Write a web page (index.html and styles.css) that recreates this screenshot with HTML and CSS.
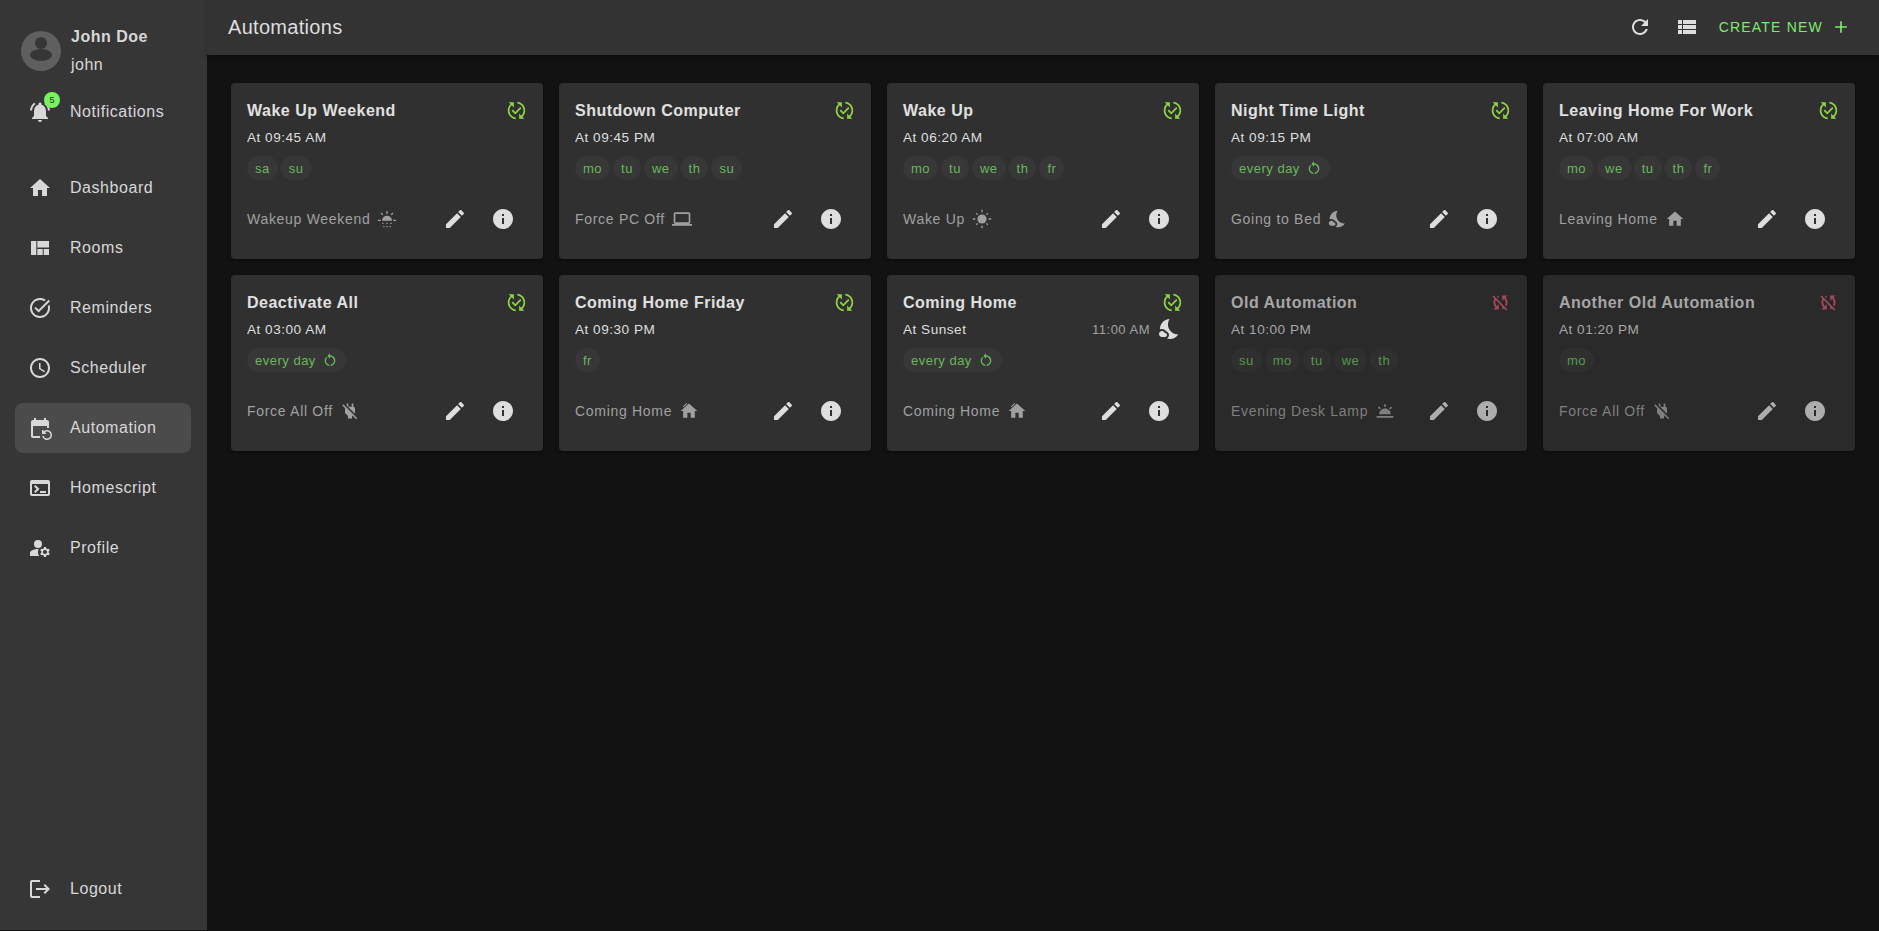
FILE: index.html
```html
<!DOCTYPE html>
<html lang="en">
<head>
    <meta charset="UTF-8">
    <meta name="viewport" content="width=device-width, initial-scale=1.0">
    <title>Automations</title>
    <link rel="stylesheet" href="styles.css">
</head>
<body>

    <svg class="icon-defs" xmlns="http://www.w3.org/2000/svg">
        <symbol id="i-bell" viewBox="0 0 24 24"><path d="M7.58 4.08 6.15 2.65C3.75 4.48 2.17 7.3 2.03 10.5h2c.15-2.65 1.51-4.97 3.55-6.42zm12.39 6.42h2c-.15-3.2-1.73-6.02-4.12-7.85l-1.42 1.43c2.02 1.45 3.39 3.77 3.54 6.42zM18 11c0-3.07-1.64-5.64-4.5-6.32V4c0-.83-.67-1.5-1.5-1.5s-1.5.67-1.5 1.5v.68C7.63 5.36 6 7.92 6 11v5l-2 2v1h16v-1l-2-2v-5zm-6 11c.14 0 .27-.01.4-.04.65-.14 1.18-.58 1.44-1.18.1-.24.15-.5.15-.78h-4c.01 1.1.9 2 2.01 2z"/></symbol>
        <symbol id="i-home" viewBox="0 0 24 24"><path d="M10 20v-6h4v6h5v-8h3L12 3 2 12h3v8z"/></symbol>
        <symbol id="i-quilt" viewBox="0 0 24 24"><path d="M21 5v6.5H9.33V5H21zm-6.33 14v-6H9.33v6h5.34zm1-6v6H21v-6h-5.33zM8.33 19V5H3v14h5.33z"/></symbol>
        <symbol id="i-task" viewBox="0 0 24 24"><path d="M22 5.18 10.59 16.6l-4.24-4.24 1.41-1.41 2.83 2.83 10-10L22 5.18zm-2.21 5.04c.13.57.21 1.17.21 1.78 0 4.42-3.58 8-8 8s-8-3.58-8-8 3.58-8 8-8c1.58 0 3.04.46 4.28 1.25l1.44-1.44C16.1 2.67 14.13 2 12 2 6.48 2 2 6.48 2 12s4.48 10 10 10 10-4.48 10-10c0-1.19-.22-2.33-.6-3.39l-1.61 1.61z"/></symbol>
        <symbol id="i-clock" viewBox="0 0 24 24"><path d="M11.99 2C6.47 2 2 6.48 2 12s4.47 10 9.99 10C17.52 22 22 17.52 22 12S17.52 2 11.99 2zM12 20c-4.42 0-8-3.58-8-8s3.58-8 8-8 8 3.58 8 8-3.58 8-8 8z"/><path d="M12.5 7H11v6l5.25 3.15.75-1.23-4.5-2.67z"/></symbol>
        <symbol id="i-event" viewBox="0 0 24 24"><path d="M21 12V6c0-1.1-.9-2-2-2h-1V2h-2v2H8V2H6v2H5c-1.1 0-2 .9-2 2v14c0 1.1.9 2 2 2h7v-2H5V10h14v2h2zm-5.36 8c.43 1.45 1.77 2.5 3.36 2.5 1.93 0 3.5-1.57 3.5-3.5s-1.57-3.5-3.5-3.5c-.95 0-1.82.38-2.45 1H18V18h-4v-4h1.5v1.43c.9-.88 2.14-1.43 3.5-1.43 2.76 0 5 2.24 5 5s-2.24 5-5 5c-2.42 0-4.44-1.72-4.9-4h1.54z"/></symbol>
        <symbol id="i-terminal" viewBox="0 0 24 24"><path d="M20 4H4c-1.11 0-2 .9-2 2v12c0 1.1.89 2 2 2h16c1.1 0 2-.9 2-2V6c0-1.1-.9-2-2-2zm0 14H4V8h16v10zm-2-1h-6v-2h6v2zM7.5 17l-1.41-1.41L8.67 13l-2.59-2.59L7.5 9l4 4-4 4z"/></symbol>
        <symbol id="i-profile" viewBox="0 0 24 24"><circle cx="10" cy="8" r="4"/><path d="M10.67 13.02c-.22-.01-.44-.02-.67-.02-2.42 0-4.68.67-6.61 1.82-.88.52-1.39 1.5-1.39 2.53V20h9.26c-.79-1.13-1.26-2.51-1.26-4 0-1.07.25-2.07.67-2.98z"/><path d="M20.75 16c0-.22-.03-.42-.06-.63l1.14-1.01-1-1.73-1.45.49c-.32-.27-.68-.48-1.08-.63L18 11h-2l-.3 1.49c-.4.15-.76.36-1.08.63l-1.45-.49-1 1.73 1.14 1.01c-.03.21-.06.41-.06.63s.03.42.06.63l-1.14 1.01 1 1.73 1.45-.49c.32.27.68.48 1.08.63L16 21h2l.3-1.49c.4-.15.76-.36 1.08-.63l1.45.49 1-1.73-1.14-1.01c.03-.21.06-.41.06-.63zM17 18c-1.1 0-2-.9-2-2s.9-2 2-2 2 .9 2 2-.9 2-2 2z"/></symbol>
        <symbol id="i-logout" viewBox="0 0 24 24"><path d="M17 7l-1.41 1.41L18.17 11H8v2h10.17l-2.58 2.58L17 17l5-5zM4 5h8V3H4c-1.1 0-2 .9-2 2v14c0 1.1.9 2 2 2h8v-2H4V5z"/></symbol>
        <symbol id="i-refresh" viewBox="0 0 24 24"><path d="M17.65 6.35C16.2 4.9 14.21 4 12 4c-4.42 0-7.99 3.58-7.99 8s3.57 8 7.99 8c3.73 0 6.84-2.55 7.73-6h-2.08c-.82 2.33-3.04 4-5.65 4-3.31 0-6-2.69-6-6s2.69-6 6-6c1.66 0 3.14.69 4.22 1.78L13 11h7V4l-2.35 2.35z"/></symbol>
        <symbol id="i-list" viewBox="0 0 24 24"><path d="M3 14h4v-4H3v4zm0 5h4v-4H3v4zM3 9h4V5H3v4zm5 5h13v-4H8v4zm0 5h13v-4H8v4zM8 5v4h13V5H8z"/></symbol>
        <symbol id="i-add" viewBox="0 0 24 24"><path d="M19 13h-6v6h-2v-6H5v-2h6V5h2v6h6v2z"/></symbol>
        <symbol id="i-on" viewBox="0 0 24 24"><path d="M17.66 9.53l-7.07 7.07-4.24-4.24 1.41-1.41 2.83 2.83 5.66-5.66 1.41 1.41zM4 12c0-2.33 1.02-4.42 2.62-5.88L9 8.5v-6H3l2.2 2.2C3.24 6.52 2 9.11 2 12c0 5.19 3.95 9.45 9 9.95v-2.02c-3.94-.49-7-3.86-7-7.93zm18 0c0-5.19-3.95-9.45-9-9.95v2.02c3.94.49 7 3.86 7 7.93 0 2.33-1.02 4.42-2.62 5.88L15 15.5v6h6l-2.2-2.2c1.96-1.82 3.2-4.41 3.2-7.3z"/></symbol>
        <symbol id="i-off" viewBox="0 0 24 24"><path d="M10 6.35V4.26c-.8.21-1.55.54-2.23.96l1.46 1.46c.25-.12.5-.24.77-.33zm-7.14-.94l2.36 2.36C4.45 8.99 4 10.44 4 12c0 2.21.91 4.2 2.36 5.64L4 20h6v-6l-2.24 2.24C6.68 15.15 6 13.66 6 12c0-1 .25-1.94.68-2.77l8.08 8.08c-.25.13-.5.25-.77.34v2.09c.8-.21 1.55-.54 2.23-.96l2.36 2.36 1.27-1.27L4.14 4.14 2.86 5.41zM20 4h-6v6l2.24-2.24C17.32 8.85 18 10.34 18 12c0 1-.25 1.94-.68 2.77l1.46 1.46C19.55 15.01 20 13.56 20 12c0-2.21-.91-4.2-2.36-5.64L20 4z"/></symbol>
        <symbol id="i-edit" viewBox="0 0 24 24"><path d="M3 17.25V21h3.75L17.81 9.94l-3.75-3.75L3 17.25zM20.71 7.04c.39-.39.39-1.02 0-1.41l-2.34-2.34c-.39-.39-1.02-.39-1.41 0l-1.83 1.83 3.75 3.75 1.83-1.83z"/></symbol>
        <symbol id="i-info" viewBox="0 0 24 24"><path d="M12 2C6.48 2 2 6.48 2 12s4.48 10 10 10 10-4.48 10-10S17.52 2 12 2zm1 15h-2v-6h2v6zm0-8h-2V7h2v2z"/></symbol>
        <symbol id="i-repeat" viewBox="0 0 24 24"><path d="M12 5V2L8 6l4 4V7c3.31 0 6 2.69 6 6 0 2.97-2.17 5.43-5 5.91v2.02c3.95-.49 7-3.85 7-7.93 0-4.42-3.58-8-8-8zm-6 8c0-1.65.67-3.15 1.76-4.24L6.34 7.34C4.9 8.79 4 10.79 4 13c0 4.08 3.05 7.44 7 7.93v-2.02c-2.83-.48-5-2.94-5-5.91z"/></symbol>
        <symbol id="i-sunrise" viewBox="0 0 24 24"><path d="M6 14a6 6 0 0 1 12 0zM11.2 2.5h1.6V6h-1.6zM4.3 5.4l1.1-1.1 2.1 2.1-1.100 1.100zM16.500 6.400l2.100-2.100 1.100 1.100-2.100 2.100zM1 13h3.500v1.500H1zM19.500 13H23v1.500h-3.500z"/><path d="M6.300 16.500h1.500V18H6.300zM11.250 16.500h1.500V18h-1.500zM16.200 16.500h1.500V18h-1.500zM7.500 20.500H9V22H7.500zM11.250 20.500h1.500V22h-1.500zM15 20.500h1.500V22H15z"/></symbol>
        <symbol id="i-sun" viewBox="0 0 24 24"><circle cx="12" cy="12" r="5.500"/><path d="M11.200 1h1.600v3h-1.600zM11.200 20h1.600v3h-1.600zM1 11.200h3v1.600H1zM20 11.200h3v1.600h-3zM4.500 5.600l1.100-1.100 1.700 1.700-1.100 1.100zM16.700 17.800l1.100-1.100 1.700 1.700-1.100 1.100zM16.700 6.200l1.700-1.700 1.100 1.100-1.700 1.700zM4.500 18.400l1.700-1.700 1.100 1.100-1.700 1.700z"/></symbol>
        <symbol id="i-moon" viewBox="0 0 24 24"><path d="M11.100 12.080C8.770 7.570 10.600 3.600 11.630 2.010 6.270 2.200 1.980 6.590 1.980 12c0 .14.020.28.020.42.620-.27 1.290-.42 2-.42 1.660 0 3.180.83 4.100 2.150 1.670.48 2.900 2.020 2.900 3.850 0 1.520-.87 2.830-2.120 3.510.98.320 2.030.500 3.110.500 3.500 0 6.580-1.800 8.370-4.520-2.360.23-6.980-.97-9.260-5.410z"/><path d="M7 16h-.18C6.400 14.840 5.300 14 4 14c-1.660 0-3 1.340-3 3s1.340 3 3 3h3c1.100 0 2-.9 2-2s-.9-2-2-2z"/></symbol>
        <symbol id="i-laptop" viewBox="0 0 24 24"><path d="M20 18c1.100 0 1.990-.9 1.990-2L22 6c0-1.100-.9-2-2-2H4c-1.100 0-2 .9-2 2v10c0 1.100.9 2 2 2H0v2h24v-2h-4zM4 6h16v10H4V6z"/></symbol>
        <symbol id="i-twilight" viewBox="0 0 24 24"><path d="M16.955 8.662l2.120-2.122 1.416 1.414-2.121 2.122zM2 18h20v2H2zm9-14h2v3h-2zM3.543 7.925L4.957 6.510l2.121 2.120-1.414 1.415zM5 16h14c0-3.870-3.130-7-7-7s-7 3.130-7 7z"/></symbol>
        <symbol id="i-power" viewBox="0 0 24 24"><path d="M18 14.490V9c0-1-1.010-2.010-2-2V3h-2v4h-4V3H8v2.480l9.510 9.500.49-.49zm-1.760 1.770L7.200 7.200l-.01.010L3.980 4 2.710 5.250l3.360 3.360C6.040 8.740 6 8.870 6 9v5.480L9.500 18v3h5v-3l.48-.48L19.450 22l1.260-1.280-4.470-4.460z"/></symbol>
        <symbol id="i-chimney" viewBox="0 0 24 24"><path d="M10 20v-6h4v6h5v-8h3L12 3 2 12h3v8z"/><path d="M4.500 6.600 9.200 2.400l.8.900-4.700 4.200z"/></symbol>
    </svg>

    <div class="layout">
        <nav class="sidebar">
            <div class="user">
                <svg class="avatar" viewBox="0 0 40 40">
                    <circle cx="20" cy="20" r="20" fill="#5f5f5f"/>
                    <circle cx="20" cy="12" r="6" fill="#363636"/>
                    <ellipse cx="20" cy="24" rx="11" ry="6" fill="#363636"/>
                </svg>
                <div class="user-text">
                    <div class="user-name">John Doe</div>
                    <div class="user-login">john</div>
                </div>
            </div>

            <a class="nav-item notifications">
                <span class="bell">
                    <svg class="nav-icon"><use href="#i-bell"/></svg>
                    <span class="badge">5</span>
                </span>
                <span>Notifications</span>
            </a>

            <div class="nav-list">
                <a class="nav-item"><svg class="nav-icon"><use href="#i-home"/></svg><span>Dashboard</span></a>
                <a class="nav-item"><svg class="nav-icon"><use href="#i-quilt"/></svg><span>Rooms</span></a>
                <a class="nav-item"><svg class="nav-icon"><use href="#i-task"/></svg><span>Reminders</span></a>
                <a class="nav-item"><svg class="nav-icon"><use href="#i-clock"/></svg><span>Scheduler</span></a>
                <a class="nav-item active"><svg class="nav-icon"><use href="#i-event"/></svg><span>Automation</span></a>
                <a class="nav-item"><svg class="nav-icon"><use href="#i-terminal"/></svg><span>Homescript</span></a>
                <a class="nav-item"><svg class="nav-icon"><use href="#i-profile"/></svg><span>Profile</span></a>
            </div>

            <a class="nav-item logout"><svg class="nav-icon"><use href="#i-logout"/></svg><span>Logout</span></a>
        </nav>

        <div class="content">
            <header class="topbar">
                <h1>Automations</h1>
                <div class="topbar-actions">
                    <svg class="top-icon"><use href="#i-refresh"/></svg>
                    <svg class="top-icon list-icon"><use href="#i-list"/></svg>
                    <span class="create-new">CREATE NEW <svg class="add-icon"><use href="#i-add"/></svg></span>
                </div>
            </header>

            <main class="cards">
                <div class="card">
                    <div class="card-head"><h2>Wake Up Weekend</h2><svg class="status on"><use href="#i-on"/></svg></div>
                    <div class="time-row"><span>At 09:45 AM</span></div>
                    <div class="chips"><span class="chip">sa</span><span class="chip">su</span></div>
                    <div class="card-foot">
                        <span class="homescript">Wakeup Weekend <svg class="hs-icon"><use href="#i-sunrise"/></svg></span>
                        <div class="card-actions"><span class="action"><svg><use href="#i-edit"/></svg></span><span class="action"><svg><use href="#i-info"/></svg></span></div>
                    </div>
                </div>

                <div class="card">
                    <div class="card-head"><h2>Shutdown Computer</h2><svg class="status on"><use href="#i-on"/></svg></div>
                    <div class="time-row"><span>At 09:45 PM</span></div>
                    <div class="chips"><span class="chip">mo</span><span class="chip">tu</span><span class="chip">we</span><span class="chip">th</span><span class="chip">su</span></div>
                    <div class="card-foot">
                        <span class="homescript">Force PC Off <svg class="hs-icon"><use href="#i-laptop"/></svg></span>
                        <div class="card-actions"><span class="action"><svg><use href="#i-edit"/></svg></span><span class="action"><svg><use href="#i-info"/></svg></span></div>
                    </div>
                </div>

                <div class="card">
                    <div class="card-head"><h2>Wake Up</h2><svg class="status on"><use href="#i-on"/></svg></div>
                    <div class="time-row"><span>At 06:20 AM</span></div>
                    <div class="chips"><span class="chip">mo</span><span class="chip">tu</span><span class="chip">we</span><span class="chip">th</span><span class="chip">fr</span></div>
                    <div class="card-foot">
                        <span class="homescript">Wake Up <svg class="hs-icon"><use href="#i-sun"/></svg></span>
                        <div class="card-actions"><span class="action"><svg><use href="#i-edit"/></svg></span><span class="action"><svg><use href="#i-info"/></svg></span></div>
                    </div>
                </div>

                <div class="card">
                    <div class="card-head"><h2>Night Time Light</h2><svg class="status on"><use href="#i-on"/></svg></div>
                    <div class="time-row"><span>At 09:15 PM</span></div>
                    <div class="chips"><span class="chip">every day <svg class="chip-icon"><use href="#i-repeat"/></svg></span></div>
                    <div class="card-foot">
                        <span class="homescript">Going to Bed <svg class="hs-icon"><use href="#i-moon"/></svg></span>
                        <div class="card-actions"><span class="action"><svg><use href="#i-edit"/></svg></span><span class="action"><svg><use href="#i-info"/></svg></span></div>
                    </div>
                </div>

                <div class="card">
                    <div class="card-head"><h2>Leaving Home For Work</h2><svg class="status on"><use href="#i-on"/></svg></div>
                    <div class="time-row"><span>At 07:00 AM</span></div>
                    <div class="chips"><span class="chip">mo</span><span class="chip">we</span><span class="chip">tu</span><span class="chip">th</span><span class="chip">fr</span></div>
                    <div class="card-foot">
                        <span class="homescript">Leaving Home <svg class="hs-icon"><use href="#i-home"/></svg></span>
                        <div class="card-actions"><span class="action"><svg><use href="#i-edit"/></svg></span><span class="action"><svg><use href="#i-info"/></svg></span></div>
                    </div>
                </div>

                <div class="card">
                    <div class="card-head"><h2>Deactivate All</h2><svg class="status on"><use href="#i-on"/></svg></div>
                    <div class="time-row"><span>At 03:00 AM</span></div>
                    <div class="chips"><span class="chip">every day <svg class="chip-icon"><use href="#i-repeat"/></svg></span></div>
                    <div class="card-foot">
                        <span class="homescript">Force All Off <svg class="hs-icon"><use href="#i-power"/></svg></span>
                        <div class="card-actions"><span class="action"><svg><use href="#i-edit"/></svg></span><span class="action"><svg><use href="#i-info"/></svg></span></div>
                    </div>
                </div>

                <div class="card">
                    <div class="card-head"><h2>Coming Home Friday</h2><svg class="status on"><use href="#i-on"/></svg></div>
                    <div class="time-row"><span>At 09:30 PM</span></div>
                    <div class="chips"><span class="chip">fr</span></div>
                    <div class="card-foot">
                        <span class="homescript">Coming Home <svg class="hs-icon"><use href="#i-chimney"/></svg></span>
                        <div class="card-actions"><span class="action"><svg><use href="#i-edit"/></svg></span><span class="action"><svg><use href="#i-info"/></svg></span></div>
                    </div>
                </div>

                <div class="card">
                    <div class="card-head"><h2>Coming Home</h2><svg class="status on"><use href="#i-on"/></svg></div>
                    <div class="time-row">
                        <span>At Sunset</span>
                        <span class="next-run">11:00 AM <svg class="next-icon"><use href="#i-moon"/></svg></span>
                    </div>
                    <div class="chips"><span class="chip">every day <svg class="chip-icon"><use href="#i-repeat"/></svg></span></div>
                    <div class="card-foot">
                        <span class="homescript">Coming Home <svg class="hs-icon"><use href="#i-chimney"/></svg></span>
                        <div class="card-actions"><span class="action"><svg><use href="#i-edit"/></svg></span><span class="action"><svg><use href="#i-info"/></svg></span></div>
                    </div>
                </div>

                <div class="card disabled">
                    <div class="card-head"><h2>Old Automation</h2><svg class="status off"><use href="#i-off"/></svg></div>
                    <div class="time-row"><span>At 10:00 PM</span></div>
                    <div class="chips"><span class="chip">su</span><span class="chip">mo</span><span class="chip">tu</span><span class="chip">we</span><span class="chip">th</span></div>
                    <div class="card-foot">
                        <span class="homescript">Evening Desk Lamp <svg class="hs-icon"><use href="#i-twilight"/></svg></span>
                        <div class="card-actions"><span class="action"><svg><use href="#i-edit"/></svg></span><span class="action"><svg><use href="#i-info"/></svg></span></div>
                    </div>
                </div>

                <div class="card disabled">
                    <div class="card-head"><h2>Another Old Automation</h2><svg class="status off"><use href="#i-off"/></svg></div>
                    <div class="time-row"><span>At 01:20 PM</span></div>
                    <div class="chips"><span class="chip">mo</span></div>
                    <div class="card-foot">
                        <span class="homescript">Force All Off <svg class="hs-icon"><use href="#i-power"/></svg></span>
                        <div class="card-actions"><span class="action"><svg><use href="#i-edit"/></svg></span><span class="action"><svg><use href="#i-info"/></svg></span></div>
                    </div>
                </div>
            </main>
        </div>
    </div>

</body>
</html>
```

FILE: styles.css
```css
* {
    box-sizing: border-box;
}

body {
    font-family: "Liberation Sans", Arial, sans-serif;
    background-color: #121212;
    color: #dedede;
    margin: 0;
    height: 100vh;
    overflow: hidden;
}

svg {
    fill: currentColor;
}

.icon-defs {
    display: none;
}

.layout {
    display: flex;
    height: 100%;
}

/* sidebar */
.sidebar {
    width: 207px;
    height: 930px;
    flex-shrink: 0;
    background-color: #363636;
    display: flex;
    flex-direction: column;
    padding-top: 31px;
    color: #d8d8d8;
}

.user {
    display: flex;
    align-items: center;
    gap: 10px;
    padding-left: 21px;
    height: 40px;
}

.avatar {
    width: 40px;
    height: 40px;
    flex-shrink: 0;
}

.user-name {
    font-size: 16px;
    font-weight: bold;
    letter-spacing: 0.5px;
    line-height: 28px;
}

.user-login {
    font-size: 16px;
    letter-spacing: 0.5px;
    line-height: 28px;
}

.nav-item {
    display: flex;
    align-items: center;
    gap: 18px;
    height: 50px;
    margin: 0 16px 0 15px;
    padding: 0 13px;
    border-radius: 8px;
    font-size: 16px;
    letter-spacing: 0.55px;
}

.nav-item.active {
    background-color: #4b4b4b;
}

.nav-icon {
    width: 24px;
    height: 24px;
    flex-shrink: 0;
}

.notifications {
    margin-top: 16px;
}

.bell {
    position: relative;
    display: flex;
}

.badge {
    position: absolute;
    top: -8px;
    left: 16px;
    width: 16px;
    height: 16px;
    border-radius: 50%;
    background-color: #78f25e;
    color: #1b3a14;
    font-size: 9px;
    letter-spacing: 0;
    text-align: center;
    line-height: 16px;
}

.nav-list {
    display: flex;
    flex-direction: column;
    gap: 10px;
    margin-top: 26px;
}

.logout {
    margin-top: auto;
    margin-bottom: 16px;
}

/* content */
.content {
    flex: 1;
    min-width: 0;
}

.topbar {
    height: 55px;
    background-color: #333333;
    display: flex;
    align-items: center;
    justify-content: space-between;
    padding: 0 28px 0 21px;
    box-shadow: 0 2px 4px rgba(0, 0, 0, 0.3);
}

.topbar h1 {
    margin: 0;
    font-size: 20px;
    font-weight: normal;
    letter-spacing: 0.3px;
}

.topbar-actions {
    display: flex;
    align-items: center;
    padding-bottom: 2px;
}

.top-icon {
    width: 24px;
    height: 24px;
    margin-right: 23px;
}

.top-icon.list-icon {
    margin-right: 20px;
}

.create-new {
    display: flex;
    align-items: center;
    gap: 8px;
    color: #80e870;
    font-size: 14px;
    letter-spacing: 1.2px;
}

.add-icon {
    width: 20px;
    height: 20px;
}

.cards {
    display: grid;
    grid-template-columns: repeat(5, 312px);
    grid-auto-rows: 176px;
    gap: 16px;
    padding: 28px 24px;
}

.card {
    background-color: #303030;
    border-radius: 4px;
    padding: 16px;
    box-shadow: 0 1px 3px rgba(0, 0, 0, 0.4);
}

.card-head {
    display: flex;
    align-items: center;
    justify-content: space-between;
    height: 22px;
    padding-top: 1px;
}

.card-head h2 {
    margin: 0;
    font-size: 16px;
    font-weight: bold;
    letter-spacing: 0.5px;
    color: #e0e0e0;
}

.status {
    width: 21px;
    height: 21px;
}

.status.on {
    color: #8fd444;
}

.status.off {
    color: #a84a5c;
}

.time-row {
    display: flex;
    align-items: center;
    justify-content: space-between;
    margin-top: 5px;
    height: 22px;
    font-size: 13.6px;
    letter-spacing: 0.5px;
}

.next-run {
    display: flex;
    align-items: center;
    gap: 8px;
    color: #a0a0a0;
    font-size: 13px;
    margin-right: 1px;
}

.next-icon {
    width: 24px;
    height: 24px;
    color: #dedede;
}

.chips {
    display: flex;
    gap: 3px;
    margin-top: 8px;
}

.chip {
    display: flex;
    align-items: center;
    gap: 6px;
    height: 24px;
    padding: 0 8px;
    border-radius: 12px;
    background-color: #373737;
    color: #68b75a;
    font-size: 13px;
    letter-spacing: 0.5px;
}

.chip-icon {
    width: 16px;
    height: 16px;
}

.card-foot {
    display: flex;
    align-items: center;
    justify-content: space-between;
    margin-top: 15px;
    height: 48px;
}

.homescript {
    display: flex;
    align-items: center;
    gap: 7px;
    color: #a0a0a0;
    font-size: 14px;
    letter-spacing: 0.7px;
}

.hs-icon {
    width: 20px;
    height: 20px;
}

.card-actions {
    display: flex;
}

.action {
    display: flex;
    align-items: center;
    justify-content: center;
    width: 48px;
    height: 48px;
}

.action svg {
    width: 24px;
    height: 24px;
}

.card.disabled {
    background-color: #2a2a2a;
}

.card.disabled h2,
.card.disabled .time-row {
    color: #a6a6a6;
}

.card.disabled .chip {
    background-color: #2f2f2f;
    color: #559a4b;
}

.card.disabled .homescript {
    color: #7f7f7f;
}

.card.disabled .action {
    color: #adadad;
}
```
